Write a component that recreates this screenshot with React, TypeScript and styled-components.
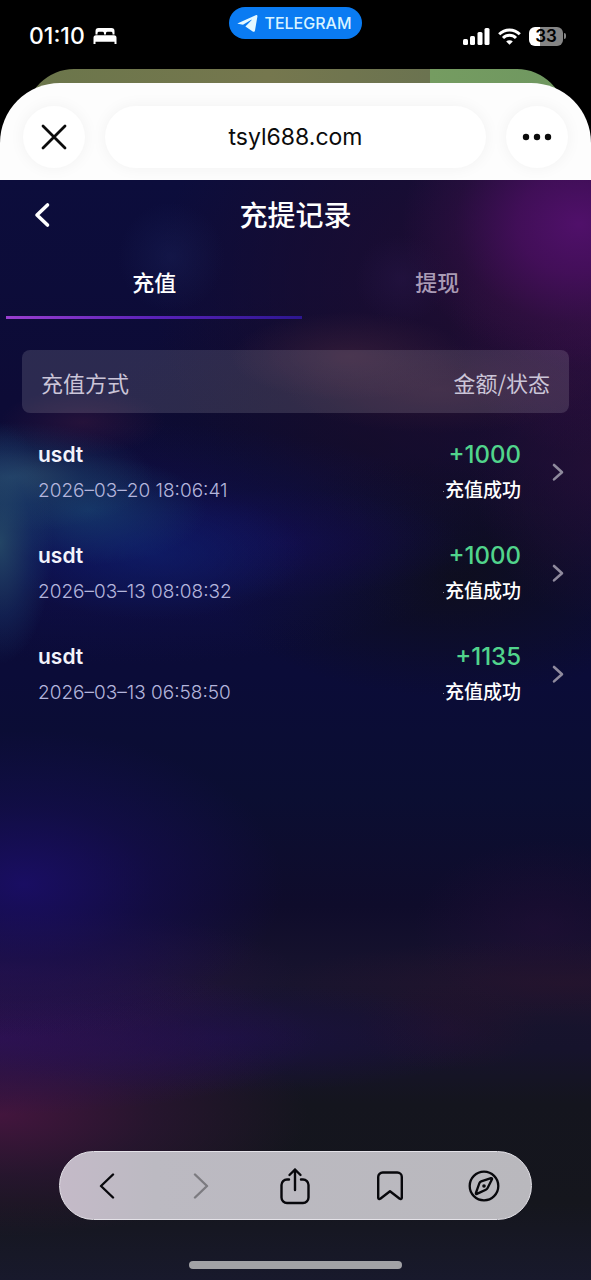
import React from "react";
import styled, { createGlobalStyle } from "styled-components";

const GlobalStyle = createGlobalStyle`
  * { box-sizing: border-box; }
  body {
    margin: 0;
    background: #000;
    font-family: Inter, "Noto Sans CJK SC", sans-serif;
    color: #fff;
  }
  button {
    margin: 0;
    padding: 0;
    border: 0;
    background: none;
    color: inherit;
    font: inherit;
    cursor: pointer;
  }
  svg { display: block; }
`;

const Screen = styled.div`
  min-height: 100vh;
  display: flex;
  flex-direction: column;
`;

const StatusBar = styled.div`
  display: grid;
  grid-template-columns: 1fr auto 1fr;
  height: 69px;
  padding: 0 25px;
`;

const StatusGroup = styled.div<{ $end?: boolean }>`
  display: flex;
  align-items: center;
  justify-content: ${(p) => (p.$end ? "flex-end" : "flex-start")};
  gap: 8px;
  height: 72px;
  padding-left: 4px;
`;

const Clock = styled.time`
  font-size: 23px;
  font-weight: 500;
  line-height: 28px;
`;

const ReturnPill = styled.button`
  display: flex;
  align-items: center;
  gap: 6px;
  height: 32px;
  margin-top: 7px;
  padding: 0 10px 0 8px;
  border-radius: 16px;
  background: #0a7bf2;
  color: #d8f3ff;
  font-size: 16px;
  font-weight: 500;
  line-height: 20px;
`;

const Battery = styled.div`
  display: flex;
  align-items: center;
  gap: 1px;
`;

const BatteryBody = styled.div`
  width: 34px;
  height: 19px;
  border-radius: 6px;
  background: linear-gradient(to right, #fff 33%, #858585 33%);
  color: #000;
  font-size: 17px;
  font-weight: 600;
  line-height: 19px;
  text-align: center;
`;

const BatteryTip = styled.div`
  width: 2px;
  height: 6px;
  border-radius: 0 2px 2px 0;
  background: #858585;
`;

const SheetBehind = styled.div`
  height: 48px;
  margin: 0 26px;
  border-radius: 48px 48px 0 0;
  background: linear-gradient(to right, #6b764b, #75774e 45%, #6b7350 75%, #759c61 75%, #6f9760);
`;

const Sheet = styled.section`
  position: relative;
  flex: 1;
  display: flex;
  flex-direction: column;
  margin-top: -34px;
  border-radius: 60px 60px 0 0;
  background: #fdfdfd;
`;

const BrowserBar = styled.header`
  display: flex;
  gap: 20px;
  padding: 23px 23px 12px;
`;

const RoundButton = styled.button`
  display: grid;
  place-items: center;
  width: 62px;
  height: 62px;
  border-radius: 31px;
  background: #fff;
  color: #0b0b0b;
  box-shadow: 0 0 16px rgba(0, 0, 0, 0.05);
`;

const Address = styled(RoundButton)`
  flex: 1;
  width: auto;
  font-size: 23px;
  line-height: 32px;
`;

const Page = styled.main`
  flex: 1;
  display: flex;
  flex-direction: column;
  background:
    radial-gradient(ellipse 30% 13% at 98% 4%, #50106a 0%, #4a0f61cc 35%, #38104a66 70%, transparent 100%),
    radial-gradient(ellipse 24% 12% at 100% 13%, #3c104a88 0%, transparent 100%),
    radial-gradient(ellipse 9% 5% at 29% 7%, #1c245c66 0%, transparent 100%),
    radial-gradient(ellipse 8% 4% at 68% 9%, #2a184c66 0%, transparent 100%),
    radial-gradient(ellipse 20% 4% at 59% 16%, #40223c99 0%, transparent 100%),
    radial-gradient(ellipse 26% 4% at 74% 19%, #34183499 0%, transparent 100%),
    radial-gradient(ellipse 14% 3% at 14% 22%, #3a183e88 0%, transparent 100%),
    radial-gradient(ellipse 9% 11% at 0% 33%, #28526ccc 0%, #1a3c6a66 60%, transparent 100%),
    radial-gradient(ellipse 24% 5% at 2% 27%, #2f5470cc 0%, #1f446a66 50%, transparent 100%),
    radial-gradient(ellipse 20% 5% at 15% 30%, #174572aa 0%, transparent 100%),
    radial-gradient(ellipse 26% 6% at 26% 34%, #0e246e88 0%, transparent 100%),
    radial-gradient(ellipse 60% 11% at 22% 33%, #10126aaa 0%, #10105066 55%, transparent 100%),
    radial-gradient(ellipse 30% 5% at 48% 33%, #1c0a6066 0%, transparent 100%),
    radial-gradient(ellipse 20% 14% at 100% 26%, #240f36cc 0%, transparent 100%),
    radial-gradient(ellipse 40% 11% at 76% 36%, #0e0e1cee 0%, transparent 100%),
    radial-gradient(ellipse 44% 14% at 4% 64%, #1c0e70cc 0%, #160d5688 50%, transparent 100%),
    radial-gradient(ellipse 50% 6% at 0% 72%, #34144e99 0%, transparent 100%),
    radial-gradient(ellipse 54% 7% at 0% 78%, #30105cbb 0%, transparent 100%),
    radial-gradient(ellipse 46% 5% at 38% 78%, #1c104a99 0%, transparent 100%),
    radial-gradient(ellipse 52% 11% at 0% 85%, #4a1542dd 0%, #35153b88 50%, transparent 100%),
    radial-gradient(ellipse 50% 4% at 96% 73%, #28142caa 0%, transparent 100%),
    radial-gradient(ellipse 22% 8% at 92% 68%, #240f3888 0%, transparent 100%),
    radial-gradient(ellipse 16% 4% at 76% 77%, #26112e88 0%, transparent 100%),
    radial-gradient(ellipse 62% 26% at 88% 10%, #220d30ee 0%, #1c0d2e88 60%, transparent 100%),
    radial-gradient(ellipse 50% 14% at 62% 24%, #0f0d28cc 0%, transparent 100%),
    linear-gradient(to bottom, #0c0d3c 0%, #0d0b36 20%, #0b0c38 45%, #0b0e32 56%, #0f0c2b 66%, #18142e 73%, #16132c 79%, #14151e 84%, #15161d 93%, #18192c 100%);
`;

const TitleBar = styled.header`
  display: grid;
  grid-template-columns: 40px 1fr 40px;
  align-items: center;
  height: 70px;
  padding: 0 22px;
`;

const BackButton = styled.button`
  display: grid;
  place-items: center;
  width: 40px;
  height: 40px;
`;

const Title = styled.h1`
  margin: 0;
  padding-top: 2px;
  text-align: center;
  font-size: 28px;
  font-weight: 500;
  line-height: 40px;
`;

const Tabs = styled.div`
  display: grid;
  grid-template-columns: 11fr 10fr;
  padding: 0 19px 0 6px;
`;

const Tab = styled.button<{ $active?: boolean }>`
  height: 69px;
  border-bottom: 3px solid transparent;
  border-image: ${(p) =>
    p.$active ? "linear-gradient(to right, #9b3fd0, #5a22b8 50%, #2c1690) 1" : "none"};
  color: ${(p) => (p.$active ? "#fff" : "#a99bb5")};
  font-size: 22px;
  font-weight: 500;
  line-height: 32px;
`;

const Records = styled.table`
  display: block;
  margin: 31px 22px 0;
`;

const Head = styled.thead`
  display: block;
`;

const HeadRow = styled.tr`
  display: flex;
  align-items: center;
  justify-content: space-between;
  height: 63px;
  padding: 0 19px;
  border-radius: 8px;
  background: rgba(255, 255, 255, 0.13);
`;

const HeadCell = styled.th`
  padding: 0;
  color: #cbc5d8;
  font-family: "Noto Sans CJK SC", sans-serif;
  font-size: 22px;
  font-weight: 400;
  line-height: 32px;
`;

const Body = styled.tbody`
  display: block;
  padding-top: 8px;
`;

const Row = styled.tr`
  display: flex;
  height: 101px;
  padding: 16px 0 0 16px;
`;

const Cell = styled.td<{ $grow?: boolean; $end?: boolean }>`
  flex: ${(p) => (p.$grow ? 1 : "none")};
  padding: 0;
  text-align: ${(p) => (p.$end ? "right" : "left")};
`;

const Method = styled.div`
  color: #f3f3fb;
  font-size: 21px;
  font-weight: 600;
  line-height: 36px;
`;

const Stamp = styled.time`
  display: block;
  color: #b4b5dc;
  font-size: 19px;
  font-weight: 300;
  line-height: 36px;
`;

const Amount = styled.div`
  color: #51d48c;
  font-size: 24px;
  font-weight: 500;
  line-height: 36px;
`;

const State = styled.div`
  display: flex;
  align-items: center;
  justify-content: flex-end;
  gap: 1px;
  font-size: 19px;
  font-weight: 500;
  line-height: 36px;

  &::before {
    content: "";
    width: 1px;
    height: 1px;
    background: #8a8a9a;
  }
`;

const OpenButton = styled.button`
  display: grid;
  place-items: center;
  width: 40px;
  height: 72px;
  margin-left: 17px;
  margin-right: -9px;
`;

const Toolbar = styled.nav`
  display: grid;
  grid-template-columns: repeat(5, 1fr);
  width: 80%;
  height: 69px;
  margin: auto auto 0;
  border: 1px solid #e4e2e8;
  border-radius: 35px;
  background: linear-gradient(to right, #c4bac8, #bcbac2 20%, #b9b8bd 100%);
  color: #08080c;
`;

const ToolButton = styled.button`
  display: grid;
  place-items: center;

  &:disabled { color: #7c7b80; }
`;

const HomeIndicator = styled.div`
  width: 36%;
  height: 8px;
  margin: 41px auto 11px;
  border-radius: 4px;
  background: #a2a2a6;
`;

const BedIcon = () => (
  <svg width="24" height="18" viewBox="0 0 24 18" fill="#fff" aria-hidden="true">
    <path d="M2.500 7.500V4a3 3 0 0 1 3-3h13a3 3 0 0 1 3 3v3.500h-2V6A1.500 1.500 0 0 0 18 4.800h-3.500A1.500 1.500 0 0 0 13 6v1.500h-2V6a1.500 1.500 0 0 0-1.500-1.200H6A1.500 1.500 0 0 0 4.500 6v1.500z" />
    <path d="M3 8.200h18a2.500 2.500 0 0 1 2.500 2.500V17h-2v-2.200h-19V17h-2v-6.300A2.500 2.500 0 0 1 3 8.200z" />
  </svg>
);

const PlaneIcon = () => (
  <svg width="21" height="19" viewBox="0 0 21 19" fill="#e4f8ff" aria-hidden="true">
    <path d="M.9 9.200 18.700 1.200c1.100-.5 1.900 0 1.700 1.200l-2.400 14c-.2 1.400-1.200 1.800-2.300 1l-7.300-5 6.300-6.300c.3-.3 0-.5-.4-.3l-8.300 5-5-1.100c-.5-.1-.6-.3-.1-.5z" />
  </svg>
);

const SignalIcon = () => (
  <svg width="27" height="17" viewBox="0 0 27 17" fill="#fff" aria-hidden="true">
    <rect x="0" y="11" width="5" height="6" rx="1.500" />
    <rect x="7" y="8" width="5" height="9" rx="1.500" />
    <rect x="14.500" y="4" width="5" height="13" rx="1.500" />
    <rect x="21.500" y="0" width="5" height="17" rx="1.500" />
  </svg>
);

const WifiIcon = () => (
  <svg width="23" height="17" viewBox="0 0 23 17" fill="none" stroke="#fff" strokeWidth="3" aria-hidden="true">
    <path d="M1.200 6.200a14.600 14.600 0 0 1 20.600 0" />
    <path d="M5 10a9.200 9.200 0 0 1 13 0" />
    <path d="M11.500 16.800 8.200 13.500a4.700 4.700 0 0 1 6.600 0z" fill="#fff" stroke="none" />
  </svg>
);

const CloseIcon = () => (
  <svg width="28" height="28" viewBox="0 0 28 28" fill="none" stroke="currentColor" strokeWidth="2.800" strokeLinecap="round" aria-hidden="true">
    <path d="m3 3 22 22M25 3 3 25" />
  </svg>
);

const MoreIcon = () => (
  <svg width="30" height="8" viewBox="0 0 30 8" fill="currentColor" aria-hidden="true">
    <circle cx="4" cy="4" r="3.200" />
    <circle cx="15" cy="4" r="3.200" />
    <circle cx="26" cy="4" r="3.200" />
  </svg>
);

const BackIcon = () => (
  <svg width="18" height="26" viewBox="0 0 18 26" fill="none" stroke="#fff" strokeWidth="3.600" strokeLinecap="round" strokeLinejoin="round" aria-hidden="true">
    <path d="M14.500 3 4 13l10.500 10" />
  </svg>
);

const RowChevron = () => (
  <svg width="14" height="20" viewBox="0 0 14 20" fill="none" stroke="#8f8a9d" strokeWidth="2.600" strokeLinejoin="round" strokeLinecap="round" aria-hidden="true">
    <path d="m3 2 8 7.200L3 16.400" />
  </svg>
);

const NavChevron = ({ forward }: { forward?: boolean }) => (
  <svg width="16" height="26" viewBox="0 0 16 26" fill="none" stroke="currentColor" strokeWidth="2.400" strokeLinecap="round" strokeLinejoin="round" aria-hidden="true">
    <path d={forward ? "m2 1.500 12 11.500L2 24.500" : "M14 1.500 2 13l12 11.500"} />
  </svg>
);

const ShareIcon = () => (
  <svg width="32" height="38" viewBox="0 0 32 38" fill="none" stroke="currentColor" strokeWidth="2.400" strokeLinecap="round" strokeLinejoin="round" aria-hidden="true">
    <path d="M10 12.500H8A5.500 5.500 0 0 0 2.500 18v12.500A5.500 5.500 0 0 0 8 36h16a5.500 5.500 0 0 0 5.500-5.500V18a5.500 5.500 0 0 0-5.500-5.500h-2" />
    <path d="M16 23V2.500M10.500 8 16 2.500 21.500 8" />
  </svg>
);

const BookmarkIcon = () => (
  <svg width="28" height="32" viewBox="0 0 28 32" fill="none" stroke="currentColor" strokeWidth="2.400" strokeLinejoin="round" aria-hidden="true">
    <path d="M2.200 7A4.500 4.500 0 0 1 6.700 2.500h14.600A4.500 4.500 0 0 1 25.800 7v20.800c0 1.200-1.200 1.700-2.100.9L14 21.300l-9.700 7.400c-.9.800-2.100.3-2.100-.9z" />
  </svg>
);

const CompassIcon = () => (
  <svg width="32" height="32" viewBox="0 0 32 32" fill="none" stroke="currentColor" strokeWidth="2.300" strokeLinejoin="round" aria-hidden="true">
    <circle cx="16" cy="16" r="14.300" />
    <path d="M13.200 11.400 23 8.200c.8-.2 1.300.3 1 1l-4.400 8.700a4 4 0 0 1-1.800 1.800L8.900 23.900c-.8.300-1.200-.2-1-.9l3.500-9.800a3 3 0 0 1 1.800-1.800z" />
    <circle cx="16" cy="16" r="1.800" fill="currentColor" stroke="none" />
  </svg>
);

const records = [
  { method: "usdt", time: "2026–03–20 18:06:41", amount: "+1000", state: "充值成功" },
  { method: "usdt", time: "2026–03–13 08:08:32", amount: "+1000", state: "充值成功" },
  { method: "usdt", time: "2026–03–13 06:58:50", amount: "+1135", state: "充值成功" },
];

export default function App() {
  return (
    <>
      <GlobalStyle />
      <Screen>
        <StatusBar>
          <StatusGroup>
            <Clock>01:10</Clock>
            <BedIcon />
          </StatusGroup>
          <ReturnPill type="button">
            <PlaneIcon />
            TELEGRAM
          </ReturnPill>
          <StatusGroup $end>
            <SignalIcon />
            <WifiIcon />
            <Battery>
              <BatteryBody>33</BatteryBody>
              <BatteryTip />
            </Battery>
          </StatusGroup>
        </StatusBar>
        <SheetBehind />
        <Sheet>
          <BrowserBar>
            <RoundButton type="button" aria-label="关闭"><CloseIcon /></RoundButton>
            <Address type="button">tsyl688.com</Address>
            <RoundButton type="button" aria-label="更多"><MoreIcon /></RoundButton>
          </BrowserBar>
          <Page>
            <TitleBar>
              <BackButton type="button" aria-label="返回"><BackIcon /></BackButton>
              <Title>充提记录</Title>
            </TitleBar>
            <Tabs role="tablist">
              <Tab type="button" role="tab" aria-selected="true" $active>充值</Tab>
              <Tab type="button" role="tab" aria-selected="false">提现</Tab>
            </Tabs>
            <Records>
              <Head>
                <HeadRow>
                  <HeadCell scope="col">充值方式</HeadCell>
                  <HeadCell scope="col">金额/状态</HeadCell>
                </HeadRow>
              </Head>
              <Body>
                {records.map((r) => (
                  <Row key={r.time}>
                    <Cell $grow>
                      <Method>{r.method}</Method>
                      <Stamp>{r.time}</Stamp>
                    </Cell>
                    <Cell $end>
                      <Amount>{r.amount}</Amount>
                      <State>{r.state}</State>
                    </Cell>
                    <Cell>
                      <OpenButton type="button" aria-label="详情"><RowChevron /></OpenButton>
                    </Cell>
                  </Row>
                ))}
              </Body>
            </Records>
            <Toolbar>
              <ToolButton type="button" aria-label="后退"><NavChevron /></ToolButton>
              <ToolButton type="button" aria-label="前进" disabled><NavChevron forward /></ToolButton>
              <ToolButton type="button" aria-label="分享"><ShareIcon /></ToolButton>
              <ToolButton type="button" aria-label="书签"><BookmarkIcon /></ToolButton>
              <ToolButton type="button" aria-label="浏览器"><CompassIcon /></ToolButton>
            </Toolbar>
            <HomeIndicator />
          </Page>
        </Sheet>
      </Screen>
    </>
  );
}
